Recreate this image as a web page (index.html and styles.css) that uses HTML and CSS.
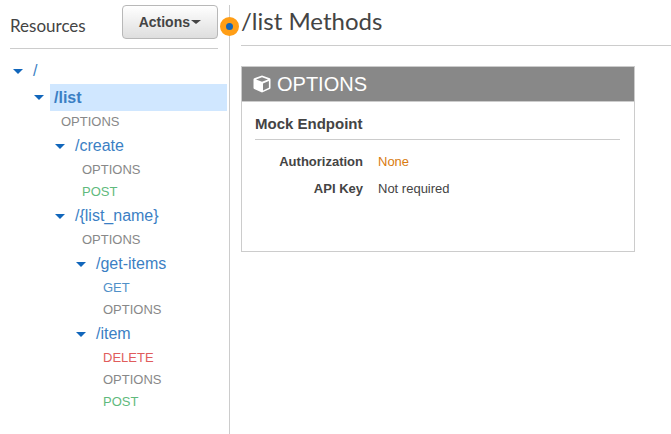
FILE: index.html
```html
<!DOCTYPE html>
<html lang="en">
<head>
<meta charset="utf-8">
<title>/list Methods</title>
<link rel="stylesheet" href="styles.css">
</head>
<body>
<div class="layout">
  <aside class="sidebar">
    <header class="sidebar-head">
      <h2 class="sidebar-title">Resources</h2>
      <button class="actions" type="button">Actions<span class="arrow"></span></button>
    </header>
    <ul class="tree">
      <li>
        <div class="resource"><span class="caret"></span><a class="path" href="#">/</a></div>
        <ul>
          <li>
            <div class="resource selected"><span class="caret"></span><a class="path" href="#">/list</a></div>
            <ul>
              <li><a class="method" href="#">OPTIONS</a></li>
              <li>
                <div class="resource"><span class="caret"></span><a class="path" href="#">/create</a></div>
                <ul>
                  <li><a class="method" href="#">OPTIONS</a></li>
                  <li><a class="method post" href="#">POST</a></li>
                </ul>
              </li>
              <li>
                <div class="resource"><span class="caret"></span><a class="path" href="#">/{list_name}</a></div>
                <ul>
                  <li><a class="method" href="#">OPTIONS</a></li>
                  <li>
                    <div class="resource"><span class="caret"></span><a class="path" href="#">/get-items</a></div>
                    <ul>
                      <li><a class="method get" href="#">GET</a></li>
                      <li><a class="method" href="#">OPTIONS</a></li>
                    </ul>
                  </li>
                  <li>
                    <div class="resource"><span class="caret"></span><a class="path" href="#">/item</a></div>
                    <ul>
                      <li><a class="method delete" href="#">DELETE</a></li>
                      <li><a class="method" href="#">OPTIONS</a></li>
                      <li><a class="method post" href="#">POST</a></li>
                    </ul>
                  </li>
                </ul>
              </li>
            </ul>
          </li>
        </ul>
      </li>
    </ul>
    <span class="handle"></span>
  </aside>
  <main class="content">
    <h1 class="title">/list Methods</h1>
    <section class="card">
      <h2 class="card-head">
        <svg class="cube" viewBox="0 0 18 18" aria-hidden="true">
          <path fill="#fff" d="M9 0.5 16.8 3.3Q17.5 3.6 17.5 4.4V13Q17.5 13.7 16.8 14L9 17.5 1.2 14Q0.5 13.7 0.5 13V4.4Q0.5 3.6 1.2 3.3Z"/>
          <path fill="#888" d="M9 2.2 15 4.4 9 6.8 3 4.4Z"/>
          <path fill="#888" d="M10 8.4 15.9 6V12.8L10 15.4Z"/>
        </svg>
        OPTIONS
      </h2>
      <div class="card-body">
        <h3 class="endpoint">Mock Endpoint</h3>
        <dl class="details">
          <dt>Authorization</dt><dd class="none">None</dd>
          <dt>API Key</dt><dd>Not required</dd>
        </dl>
      </div>
    </section>
  </main>
</div>
</body>
</html>
```

FILE: styles.css
```css
* { box-sizing: border-box; }

body {
  margin: 0;
  background: #fff;
  color: #444;
  font-family: "Liberation Sans", Arial, sans-serif;
  font-size: 13px;
}

h1, h2, h3, ul, dl, dd { margin: 0; padding: 0; }
ul { list-style: none; }
a { text-decoration: none; }

.layout {
  display: flex;
  min-height: 100vh;
  padding-top: 5px;
}

.sidebar {
  position: relative;
  flex: 0 0 230px;
  padding: 0 2px 0 10px;
  border-right: 1px solid #ccc;
}

.sidebar-head {
  display: flex;
  justify-content: space-between;
  align-items: flex-start;
  height: 44px;
  margin-right: 9px;
  border-bottom: 1px solid #ccc;
}

.sidebar-title {
  font: 400 17px/42px Lato, sans-serif;
}

.actions {
  display: flex;
  align-items: center;
  gap: 1px;
  height: 34px;
  padding: 0 16px;
  border: 1px solid #b8b8b8;
  border-radius: 4px;
  background: linear-gradient(#fff, #dedede);
  color: #444;
  font: 700 14px "Liberation Sans", Arial, sans-serif;
}

.arrow {
  border: 5px solid transparent;
  border-top: 4px solid #444;
  border-bottom: 0;
}

.tree { padding: 9px 0 0 3px; }
.tree ul { padding-left: 21px; }

.resource {
  display: flex;
  align-items: center;
  height: 26px;
}

.caret {
  border: 5px solid transparent;
  border-top-color: #1166bb;
  border-bottom: 0;
  margin-right: 6px;
}

.path {
  flex: 1;
  padding-left: 4px;
  color: #3b7fc4;
  font-size: 16px;
  line-height: 26px;
}

.selected { height: 27px; }
.selected .path {
  background: #d0e7ff;
  font-weight: 700;
  line-height: 27px;
}

.method {
  display: block;
  padding-left: 6px;
  color: #888;
  font-size: 13px;
  line-height: 22px;
}
.post { color: #5fba7d; }
.get { color: #5090c8; }
.delete { color: #e05c5c; }

.handle {
  position: absolute;
  top: 12px;
  right: -10px;
  width: 19px;
  height: 19px;
  border: 6px solid #ff9e16;
  border-radius: 50%;
  background: #1166bb;
}

.content {
  flex: 1;
  min-width: 0;
  padding-left: 11px;
}

.title {
  height: 41px;
  border-bottom: 1px solid #ccc;
  font: 400 24px/32px Lato, sans-serif;
}

.card {
  min-height: 186px;
  margin: 20px 36px 0 0;
  border: 1px solid #ccc;
}

.card-head {
  display: flex;
  align-items: center;
  gap: 6px;
  height: 35px;
  padding-left: 11px;
  border-bottom: 1px solid #ccc;
  background: #888;
  color: #fff;
  font-size: 20px;
  font-weight: 400;
}

.cube { width: 18px; height: 18px; }

.card-body { padding: 8px 14px 0 13px; }

.endpoint {
  padding-bottom: 1px;
  border-bottom: 1px solid #ccc;
  font-size: 15px;
  line-height: 28px;
}

.details {
  display: grid;
  grid-template-columns: 108px 1fr;
  column-gap: 15px;
  padding-top: 8px;
  line-height: 27px;
}
.details dt {
  font-weight: 700;
  text-align: right;
}
.details .none { color: #d97b10; }
```
